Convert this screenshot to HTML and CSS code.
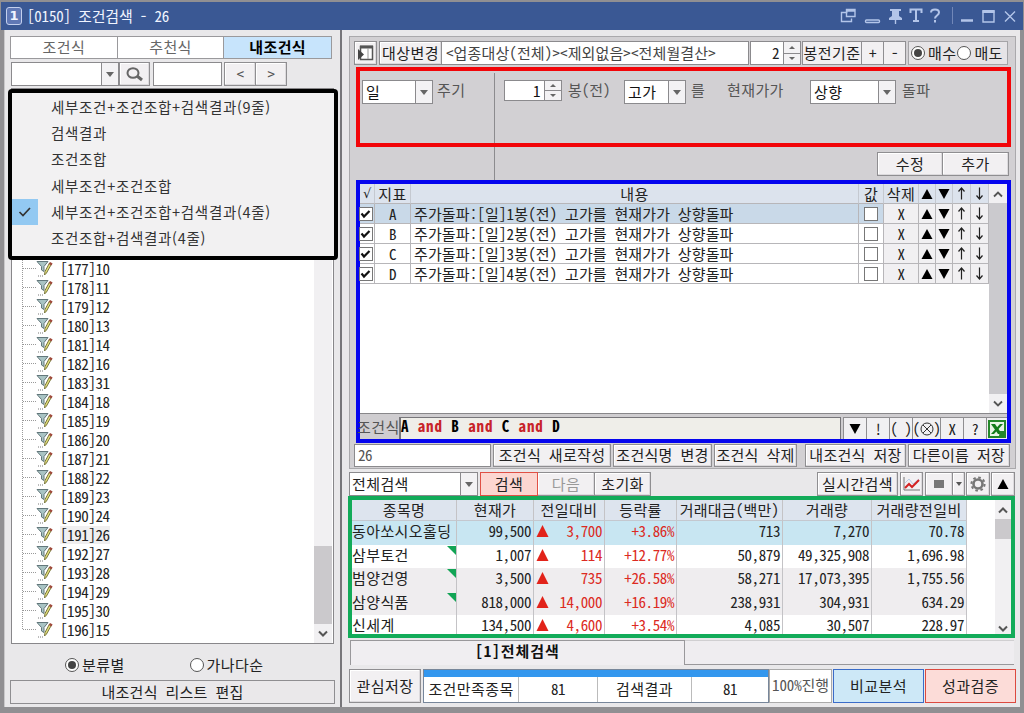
FILE: index.html
```html
<!DOCTYPE html>
<html lang="ko">
<head>
<meta charset="utf-8">
<title>[0150] 조건검색 - 26</title>
<link rel="stylesheet" href="styles.css">
</head>
<body>
<div class="window">
  <header class="titlebar">
    <span class="badge">1</span><span class="title">[0150] 조건검색 - 26</span>
    <svg class="winicons" width="184" height="28" viewBox="0 0 184 28" fill="none" stroke="#b3c5e9" stroke-width="1.4">
      <path d="M8.500 10.500h-6v9h10v-3M7.500 7.500h8.500v7H7.500zM7.500 9h8.500"/>
      <rect x="26.500" y="18" width="14" height="2.500" rx="1"/>
      <path d="M51 7h11v2h-2v5l3 2v2H50v-2l3-2V9h-2z" fill="#b3c5e9" stroke="none"/><path d="M56.500 17v5"/>
      <path d="M71.500 11V7.500h11V11M77 7.500V19M74 19h6" stroke-width="2"/>
      <path d="M92 10.500c0-4 8-4 8 0 0 3-4 3-4 6M96 18v2.500" stroke-width="2"/>
      <path d="M113.500 5v17" stroke="#7187b8" stroke-width="1"/>
      <path d="M122 18.500h12" stroke-width="2.500"/>
      <path d="M144 9h11v11h-11z"/><path d="M143.500 9.500h12" stroke-width="3"/>
      <path d="M166 9.500l10 10M176 9.500l-10 10"/>
    </svg>
  </header>
  <div class="main">
    <aside class="left">
      <nav class="tabs"><span>조건식</span><span>추천식</span><span class="on">내조건식</span></nav>
      <div class="find">
        <div class="field f1"><i class="caret"></i></div>
        <button class="btn mag"><svg width="22" height="18" viewBox="0 0 22 18" fill="none" stroke="#666"><ellipse cx="9" cy="8" rx="5.500" ry="4.800" stroke-width="2"/><path d="M13 11l5 4" stroke-width="3"/></svg></button>
        <div class="field f2"></div>
        <button class="btn ar">&lt;</button><button class="btn ar last">&gt;</button>
      </div>
      <div class="listbox">
        <div class="tree" id="tree"></div>
        <div class="vscroll"><i class="thumb"></i><svg class="chev" width="12" height="8" viewBox="0 0 12 8"><path d="M2 1.500l4 4 4-4" fill="none" stroke="#555" stroke-width="2"/></svg></div>
      </div>
      <div class="sort"><i class="radio sel"></i><span>분류별</span><i class="radio second"></i><span>가나다순</span></div>
      <button class="btn edit">내조건식 리스트 편집</button>
      <div class="menu">
        <div><b></b>세부조건+조건조합+검색결과(9줄)</div>
        <div><b></b>검색결과</div>
        <div><b></b>조건조합</div>
        <div><b></b>세부조건+조건조합</div>
        <div><b class="ck"><svg width="14" height="12" viewBox="0 0 14 12"><path d="M1.500 6l3.500 3.500L12 2" fill="none" stroke="#333" stroke-width="1.700"/></svg></b>세부조건+조건조합+검색결과(4줄)</div>
        <div><b></b>조건조합+검색결과(4줄)</div>
      </div>
    </aside>
    <section class="right">
      <div class="builder">
        <div class="target">
          <button class="btn ic"><svg width="18" height="18" viewBox="0 0 18 18"><path d="M3.500 2.500h12v13h-12z" fill="#fff" stroke="#555" stroke-width="1.500"/><path d="M3 3h13" stroke="#555" stroke-width="3"/><path d="M11 4v11" stroke="#999"/><path d="M1 5l6 5.500L1 16z" fill="#444"/></svg></button>
          <div class="field tgt"><span class="btn lbl">대상변경</span><span class="val">&lt;업종대상(전체)&gt;&lt;제외없음&gt;&lt;전체월결산&gt;</span></div>
          <div class="field num n2">2<i class="spin"></i></div>
          <div class="grp"><span>봉전기준</span><span>+</span><span>-</span></div>
          <div class="radios"><i class="radio sel"></i>매수<i class="radio"></i>매도</div>
        </div>
        <div class="cond">
          <div class="period"><div class="field s1">일<i class="caret"></i></div><span>주기</span></div>
          <div class="expr">
            <div class="field num s2">1<i class="spin"></i></div><span class="t1">봉(전)</span>
            <div class="field s3">고가<i class="caret"></i></div><span class="t2">를</span><span class="t3">현재가가</span>
            <div class="field s4">상향<i class="caret"></i></div><span class="t4">돌파</span>
          </div>
        </div>
        <div class="actions"><button class="btn">수정</button><button class="btn">추가</button></div>
        <div class="grid">
          <div class="gbody">
            <div class="rows" id="rules"></div>
            <div class="gscroll"><span><svg width="12" height="8" viewBox="0 0 12 8"><path d="M2 6.500l4-4 4 4" fill="none" stroke="#555" stroke-width="1.800"/></svg></span><i></i><span><svg width="12" height="8" viewBox="0 0 12 8"><path d="M2 1.500l4 4 4-4" fill="none" stroke="#555" stroke-width="1.800"/></svg></span></div>
          </div>
          <div class="formula">
            <span class="flabel">조건식</span>
            <div class="finput nofit"><b>A</b> <em>and</em> <b>B</b> <em>and</em> <b>C</b> <em>and</em> <b>D</b></div>
            <div class="keys">
              <span><svg width="12" height="10" viewBox="0 0 12 10"><path d="M.5 0h11L6 10z"/></svg></span><span>!</span><span>( )</span><span class="wide">(<svg width="14" height="14" viewBox="0 0 14 14" fill="none" stroke="#333"><circle cx="7" cy="7" r="6"/><path d="M3 3l8 8M11 3l-8 8"/></svg>)</span><span>X</span><span>?</span>
              <span class="xl"><svg width="18" height="18" viewBox="0 0 18 18"><path d="M1 1h16v16H1z" fill="#e8f5e6" stroke="#24872a" stroke-width="2"/><path d="M3 4h4l7 10h-4z" fill="#137c1b"/><path d="M12 4h3L6 14H3z" fill="#137c1b"/><path d="M12 11h4v5h-5z" fill="#24872a"/></svg></span>
            </div>
          </div>
        </div>
        <div class="names">
          <div class="field">26</div><button class="btn w1">조건식 새로작성</button><button class="btn w2">조건식명 변경</button><button class="btn w3">조건식 삭제</button><button class="btn w4">내조건식 저장</button><button class="btn w5">다른이름 저장</button>
        </div>
      </div>
      <div class="searchbar">
        <div class="field all">전체검색<i class="caret"></i></div>
        <button class="btn go">검색</button><button class="btn nx">다음</button><button class="btn rs">초기화</button>
        <button class="btn rt">실시간검색</button>
        <button class="btn q1"><svg width="18" height="16" viewBox="0 0 18 16" fill="none"><path d="M1 1v13h16" stroke="#777"/><path d="M2 7l4-4 4 5 6-5" stroke="#b9cbe3"/><path d="M2 12l4-4 3 3 7-7" stroke="#d32222" stroke-width="2"/></svg></button>
        <button class="btn q2"><i></i></button><button class="btn q3"><svg width="6" height="4" viewBox="0 0 6 4"><path d="M0 0h6L3 4z" fill="#555"/></svg></button>
        <button class="btn q4"><svg width="16" height="16" viewBox="0 0 16 16" fill="none" stroke="#777"><circle cx="8" cy="8" r="4.500" stroke-width="2.600"/><circle cx="8" cy="8" r="6.600" stroke-width="2" stroke-dasharray="2.600 2.584"/></svg></button>
        <button class="btn q5"><svg width="12" height="10" viewBox="0 0 12 10"><path d="M6 0l5.500 10H.5z"/></svg></button>
      </div>
      <div class="result">
        <div class="rtable" id="result"></div>
        <div class="rscroll"><svg width="12" height="8" viewBox="0 0 12 8"><path d="M2 6.500l4-4 4 4" fill="none" stroke="#555" stroke-width="2"/></svg><i></i><svg class="dn" width="12" height="8" viewBox="0 0 12 8"><path d="M2 1.500l4 4 4-4" fill="none" stroke="#555" stroke-width="2"/></svg></div>
      </div>
      <div class="rtabs nofit"><b>[1]전체검색</b><i></i></div>
      <footer class="foot">
        <button class="btn save">관심저장</button>
        <div class="stats"><div class="bar"></div><div class="cells"><span>조건만족종목</span><span>81</span><span>검색결과</span><span>81</span></div></div>
        <div class="pct">100%진행</div>
        <button class="btn cmp">비교분석</button><button class="btn perf">성과검증</button>
      </footer>
    </section>
  </div>
</div>
<script src="app.js"></script>
</body>
</html>
```
FILE: app.js
```js
const funnel = '<svg class="funnel" width="18" height="17" viewBox="0 0 18 17"><path d="M1 1.500h11L8 6.500v5l-2.500-1.500V6.500z" fill="#a9c4c4" stroke="#62777b"/><path d="M15.500 4l-5 9-2 2 .5-3.500 4.500-8.500z" fill="#e6e27a" stroke="#77753c"/><path d="M13.500 3l2.500 1.500" stroke="#a04a3c" stroke-width="2.500"/><path d="M2 16h6" stroke="#777" stroke-dasharray="1 1"/></svg>';
const values = [10, 11, 12, 13, 14, 16, 31, 18, 19, 20, 21, 22, 23, 24, 26, 27, 28, 29, 30, 15];
document.getElementById('tree').innerHTML = values.map((v, i) =>
  `<div class="node"><i></i>${funnel}<span${i === 14 ? ' class="cur"' : ''}>[${177 + i}]${v}</span></div>`).join('');

const up = '<svg width="12" height="10" viewBox="0 0 12 10"><path d="M6 0l5.500 10H.5z"/></svg>';
const down = '<svg width="12" height="10" viewBox="0 0 12 10"><path d="M.5 0h11L6 10z"/></svg>';
const arrow = d => `<svg width="9" height="13" viewBox="0 0 9 13" fill="none" stroke="#222" stroke-width="1.2"><path d="${d}"/></svg>`;
const tail = [up, down, arrow('M4.500 12.500V1M1.500 4.500l3-3.500 3 3.500'), arrow('M4.500 .5V12M1.500 8.500l3 3.500 3-3.500')];
const check = '<i class="cb"><svg width="11" height="10" viewBox="0 0 11 10"><path d="M1.500 4.500L4 7.500 9.500 2" fill="none" stroke="#111" stroke-width="2.200"/></svg></i>';
const row = (cls, cells) => `<div class="row ${cls}">${cells.map(c => `<span>${c}</span>`).join('')}</div>`;
document.getElementById('rules').innerHTML =
  row('head', ['√', '지표', '내용', '값', '삭제', ...tail]) +
  ['A', 'B', 'C', 'D'].map((k, i) => row(i ? '' : 'cur',
    [check, k, `주가돌파:[일]${i + 1}봉(전) 고가를 현재가가 상향돌파`, '<i class="cb"></i>', 'X', ...tail])).join('');

const data = [
  ['동아쏘시오홀딩', '99,500', '3,700', '+3.86%', '713', '7,270', '70.78'],
  ['삼부토건', '1,007', '114', '+12.77%', '50,879', '49,325,908', '1,696.98'],
  ['범양건영', '3,500', '735', '+26.58%', '58,271', '17,073,395', '1,755.56'],
  ['삼양식품', '818,000', '14,000', '+16.19%', '238,931', '304,931', '634.29'],
  ['신세계', '134,500', '4,600', '+3.54%', '4,085', '30,507', '228.97']];
const tone = ['active', '', 'shade', 'shade', ''];
const rise = '<svg width="13" height="12" viewBox="0 0 13 12"><path d="M6.500 0L12.500 12H.5z" fill="#e2231a"/></svg>';
document.getElementById('result').innerHTML =
  '<div class="rr rh">' + ['종목명', '현재가', '전일대비', '등락률', '거래대금(백만)', '거래량', '거래량전일비'].map(c => `<span>${c}</span>`).join('') + '</div>' +
  data.map((d, i) => `<div class="rr ${tone[i]}">${d.map((c, j) =>
    `<span>${j === 2 ? rise : ''}${c}${j === 0 && i > 0 && i < 4 ? '<i class="flag"></i>' : ''}</span>`).join('')}</div>`).join('');

const walker = document.createTreeWalker(document.querySelector('.window'), NodeFilter.SHOW_TEXT);
while (walker.nextNode()) {
  const text = walker.currentNode.data.trim();
  const el = walker.currentNode.parentElement;
  if (!text || el.closest('.menu, .nofit, .badge')) continue;
  const wide = (text.match(/[가-힣]/g) || []).length;
  const narrow = text.length - wide;
  el.style.letterSpacing = (0.4 * (wide - narrow) / text.length).toFixed(3) + 'px';
}
```
FILE: styles.css
```css
* { box-sizing: border-box; }
body { margin: 0; width: 1024px; height: 713px; overflow: hidden; background: #8e8d90;
  font: 15px/18px "Noto Sans Mono CJK KR", "Noto Sans CJK KR", sans-serif; color: #222; }
i, em { font-style: normal; }
svg { flex: none; display: block; }
button { font: inherit; color: inherit; padding: 0; margin: 0; white-space: nowrap; }
.window { height: 713px; padding: 2px 4px 6px 1px; display: flex; flex-direction: column; background: #908f92; }
.titlebar { height: 28px; flex: none; background: #3a5894; display: flex; align-items: center; color: #f0f4ff; padding-left: 5px; margin-right: -3px; }
.badge { width: 16px; height: 18px; border: 1.500px solid #c4d0ee; border-radius: 3px; font: bold 13px/15px "DejaVu Sans", sans-serif; text-align: center; background: #6078b5; margin-right: 5px; }
.title { flex: 1; }
.main { flex: 1; min-height: 0; display: flex; margin-left: 3px; background: #e9e8ea; }
.btn { border: 1px solid #8f8e91; background: #f2f0f2; box-shadow: inset -1px -1px #dcdadd, inset 1px 1px #fff; display: flex; align-items: center; justify-content: center; border-radius: 0; flex: none; padding-bottom: 1px; }
.field { border: 1px solid #8b8a8d; background: #fff; display: flex; align-items: center; flex: none; height: 24px; white-space: nowrap; }
.caret { width: 17px; align-self: stretch; border-left: 1px solid #8b8a8d; background: #f3f2f4; margin-left: auto; display: flex; align-items: center; justify-content: center; }
.caret::after { content: ""; border: 4.500px solid transparent; border-top: 5.500px solid #666; border-bottom: 0; }
.radio { width: 14px; height: 14px; border: 1px solid #555; border-radius: 50%; background: #fff; flex: none; display: flex; align-items: center; justify-content: center; }
.radio.sel::after { content: ""; width: 8px; height: 8px; border-radius: 50%; background: #444; }
/* left pane */
.left { width: 338px; flex: none; padding: 6px 8px 0 6px; border-right: 2px solid #77767a; border-left: 1px solid #c9c8ca; position: relative; display: flex; flex-direction: column; }
.tabs { display: flex; height: 23px; flex: none; width: 322px; border: 1px solid #9a999c; background: #fff; margin-left: -1px; }
.tabs span { width: 107px; text-align: center; line-height: 19px; color: #666; border-right: 1px solid #9a999c; }
.tabs .on { background: #c7e4fc; color: #000; font-weight: bold; border: 0; }
.find { display: flex; margin-top: 3px; height: 24px; flex: none; }
.f1 { width: 108px; }
.mag { width: 31px; margin-right: 3px; }
.f2 { width: 69px; margin-right: 2px; }
.ar { width: 32px; color: #555; }
.last { margin-left: -1px; }
.listbox { margin-top: 2px; height: 556px; width: 323px; border: 1px solid #88878a; background: #fff; display: flex; justify-content: space-between; flex: none; padding: 170px 1px 0 10px; }
.tree { border-left: 1px dotted #999; height: 370px; }
.node { height: 19px; display: flex; align-items: center; }
.node > i { width: 13px; border-top: 1px dotted #999; }
.node span { margin-left: 6px; }
.node .cur { background: #f0eff0; }
.vscroll { width: 18px; background: #f1f0f2; display: flex; flex-direction: column; align-items: center; }
.vscroll .thumb { width: 18px; height: 78px; background: #cbc9cc; margin-top: 287px; flex: none; }
.vscroll .chev { margin-top: 6px; }
.sort { height: 36px; display: flex; align-items: center; padding: 6px 0 0 54px; flex: none; }
.sort span { margin-left: 3px; }
.second { margin-left: 65px; }
.edit { width: 325px; height: 24px; margin-left: -1px; background: #eae8ea; box-shadow: none; }
.menu { position: absolute; left: 3px; top: 59px; width: 330px; height: 171px; border: 4px solid #000; border-radius: 4px; background: #f2f1f2; padding-top: 1px; font: 14.500px/26px "Noto Sans CJK KR", sans-serif; color: #333; letter-spacing: .7px; }
.menu div { height: 26.200px; display: flex; align-items: center; }
.menu b { width: 26px; height: 26px; margin-right: 13px; display: flex; align-items: center; justify-content: center; }
.menu .ck { background: #93c9f2; }
/* condition builder */
.right { flex: 1; min-width: 0; padding: 6px 4px 0 7px; }
.builder { width: 667px; height: 433px; border: 1px solid #aaa9ac; background: #d2d0d3; padding: 4px 6px 0 4px; }
.target { display: flex; height: 24px; }
.ic { width: 23px; margin-right: 2px; }
.tgt { width: 370px; }
.lbl { border-width: 0 1px 0 0; height: 22px; width: 62px; font-weight: 500; }
.val { margin-left: 4px; color: #444; }
.num { justify-content: flex-end; }
.spin { width: 17px; margin-left: 4px; align-self: stretch; border-left: 1px solid #8b8a8d; background: linear-gradient(#8b8a8d, #8b8a8d) center/100% 1px no-repeat #f3f2f4; display: flex; flex-direction: column; align-items: center; justify-content: space-around; }
.spin::before { content: ""; border: 3px solid transparent; border-bottom-color: #666; border-top: 0; }
.spin::after { content: ""; border: 3px solid transparent; border-top-color: #666; border-bottom: 0; }
.n2 { width: 51px; margin: 0 1px; }
.grp { display: flex; border: 1px solid #8f8e91; background: #f2f0f2; width: 104px; margin-right: 2px; line-height: 21px; text-align: center; }
.grp span { width: 23px; border-left: 1px solid #8f8e91; }
.grp span:first-child { width: 58px; border: 0; flex: none; white-space: nowrap; }
.radios { display: flex; align-items: center; border: 1px solid #a5a4a7; width: 100px; padding-left: 1px; background: #e6e4e7; white-space: nowrap; }
.radios .radio { margin: 0 3px 0 1px; }
.cond { margin: 2px 0 0 2px; width: 655px; height: 80px; border: 4px solid #f20509; display: flex; color: #555; }
.cond .field { color: #111; padding-left: 3px; }
.cond span { line-height: 19px; white-space: nowrap; }
.period { width: 135px; border-right: 1px solid #8c8b8e; display: flex; padding: 7px 0 0 2px; align-items: flex-start; margin-top: 2px; }
.expr { display: flex; padding: 9px 0 0 9px; align-items: flex-start; }
.s1 { width: 71px; margin-right: 4px; }
.s2 { width: 58px; height: 21px; margin-right: 6px; }
.t1 { width: 56px; } .s3 { width: 62px; } .t2 { margin-left: 5px; width: 36px; } .t3 { width: 83px; } .s4 { width: 86px; } .t4 { margin-left: 6px; }
.actions { height: 33px; margin-left: 140px; border-left: 1px solid #8c8b8e; display: flex; justify-content: flex-end; padding: 5px 0 4px; }
.actions .btn { width: 66px; height: 24px; }
.actions .btn + .btn { margin-left: -1px; width: 67px; }
.grid { margin-left: 2px; width: 655px; height: 263px; border: 4px solid #0505ee; background: #cfcdd0; }
.gbody { height: 230px; display: flex; background: #fff; border-bottom: 1px solid #88878a; }
.rows { width: 629px; }
.row { display: grid; grid-template-columns: 15px 36px 448px 25px 35px 17px 17px 18px 18px; height: 20px; }
.row span { border-right: 1px solid #b7b6b9; border-bottom: 1px solid #b7b6b9; display: flex; align-items: center; justify-content: center; white-space: nowrap; line-height: 18px; }
.row.head span { background: #dce3ed; border-right-color: #c5c9d0; }
.row.head span:first-child { font: 13px/18px "DejaVu Sans", sans-serif; }
.row.cur span { background: #c9d9e8; }
.row:not(.head) span:nth-child(3) { justify-content: flex-start; padding-left: 3px; white-space: pre; }
.row:not(.head) span:nth-child(n+5) { background: #f1f0f2; }
.cb { width: 14px; height: 14px; border: 1px solid #777; background: #fff; display: flex; align-items: center; justify-content: center; flex: none; }
.row span:first-child .cb { margin-left: -3px; }
.gscroll { flex: 1; background: #cbcace; display: flex; flex-direction: column; }
.gscroll span { height: 19px; background: #f1f0f2; display: flex; align-items: center; justify-content: center; }
.gscroll i { flex: 1; }
.formula { display: flex; height: 25px; padding-top: 3px; }
.flabel { width: 42px; margin-left: -3px; color: #555; line-height: 20px; white-space: nowrap; overflow: hidden; }
.finput { width: 443px; border: 1px solid #77767a; border-width: 1px 1px 0 2px; background: #efeee9; line-height: 16px; white-space: pre; font-weight: bold; color: #000; letter-spacing: .9px; }
.finput em { color: #c8232a; }
.keys { display: flex; flex: 1; padding-left: 2px; }
.keys span { width: 23px; border-left: 1px solid #8f8e91; border-top: 1px solid #8f8e91; background: #f1f0f2; display: flex; align-items: center; justify-content: center; white-space: pre; overflow: hidden; flex: none; }
.keys .wide { width: 28px; }
.keys .xl { width: 21px; border-right: 0; }
.names { display: flex; margin-top: 1px; height: 23px; }
.names .field { width: 137px; height: 23px; padding: 0 0 2px 3px; margin-right: 2px; color: #555; }
.names .btn { margin-right: 2px; padding-bottom: 2px; }
.w1 { width: 118px; } .w2 { width: 99px; } .names .w3 { width: 83px; margin-right: 8px; } .w4 { width: 101px; } .w5 { width: 102px; }
/* search results */
.searchbar { display: flex; margin-top: 3px; height: 24px; width: 666px; }
.all { width: 129px; margin-right: 2px; padding-left: 2px; }
.go { width: 58px; background: #fcd6d1; border-color: #e05045; box-shadow: none; }
.nx { width: 57px; color: #999; border-left: 0; }
.rs { width: 57px; margin-left: -1px; }
.rt { width: 81px; margin-left: auto; margin-right: 2px; }
.q1 { width: 23px; margin-right: 2px; } .q2 { width: 28px; } .q2 i { width: 10px; height: 8px; background: #777; }
.q3 { width: 13px; margin-left: -1px; margin-right: 1px; } .q4 { width: 24px; margin-right: 1px; } .q5 { width: 24px; }
.result { margin-left: -1px; width: 667px; height: 142px; border: 4px solid #12ab59; display: flex; overflow: hidden; background: #fff; justify-content: space-between; }
.rtable { width: 615px; }
.rr { display: grid; grid-template-columns: 105px 77px 71px 72px 106px 89px 95px; height: 23.500px; }
.rr span { border-right: 1px solid #c4c3c6; display: flex; align-items: center; justify-content: flex-end; padding: 0 2px 3px 0; white-space: nowrap; position: relative; }
.rr.rh { height: 21px; }
.rr.rh span { justify-content: center; background: #dde4ee; border-bottom: 1px solid #c4c8cf; padding: 0; }
.rr:not(.rh) span:first-child { justify-content: flex-start; }
.rr:not(.rh) span:nth-child(3), .rr:not(.rh) span:nth-child(4) { color: #dc2a22; }
.rr span svg { margin: 0 auto 0 2px; }
.active { background: #c8e6f2; }
.shade { background: #efedef; }
.flag { position: absolute; right: 0; top: 1px; border-top: 9px solid #12a455; border-left: 9px solid transparent; }
.rscroll { width: 16px; background: #f1f0f2; display: flex; flex-direction: column; align-items: center; padding-top: 6px; }
.rscroll i { width: 16px; height: 20px; background: #cbc9cc; margin-top: 5px; }
.rscroll .dn { margin-top: auto; margin-bottom: 1px; }
.rtabs { height: 25px; margin-top: 2px; display: flex; width: 665px; }
.rtabs b { width: 335px; margin-left: 1px; border: 1px solid #99989b; border-width: 1px 1px 0 1px; background: #f0eef1; text-align: center; line-height: 20px; color: #111; letter-spacing: 1px; }
.rtabs i { flex: 1; border-bottom: 1px solid #99989b; border-top: 1px solid #d0cfd1; background: #efedf0; }
.foot { display: flex; margin-top: 4px; height: 34px; width: 667px; }
.save { width: 72px; margin-right: 2px; }
.stats { width: 346px; border: 1px solid #77869a; background: #fff; }
.bar { height: 7px; background: #3397ee; }
.cells { display: grid; grid-template-columns: 95px 79px 94px 76px; height: 25px; line-height: 24px; text-align: center; }
.cells span { border-right: 1px solid #bbb; white-space: nowrap; }
.cells span:last-child { border: 0; }
.pct { width: 63px; border: 1px solid #aaa; background: #fff; line-height: 30px; text-align: center; color: #555; white-space: nowrap; margin-right: 1px; }
.cmp { width: 91px; background: #cde8f7; border: 1.500px solid #3a6cc8; margin-right: 1px; box-shadow: none; }
.perf { width: 91px; background: #fcdcd8; border: 1.500px solid #dc4a40; box-shadow: none; }
```
